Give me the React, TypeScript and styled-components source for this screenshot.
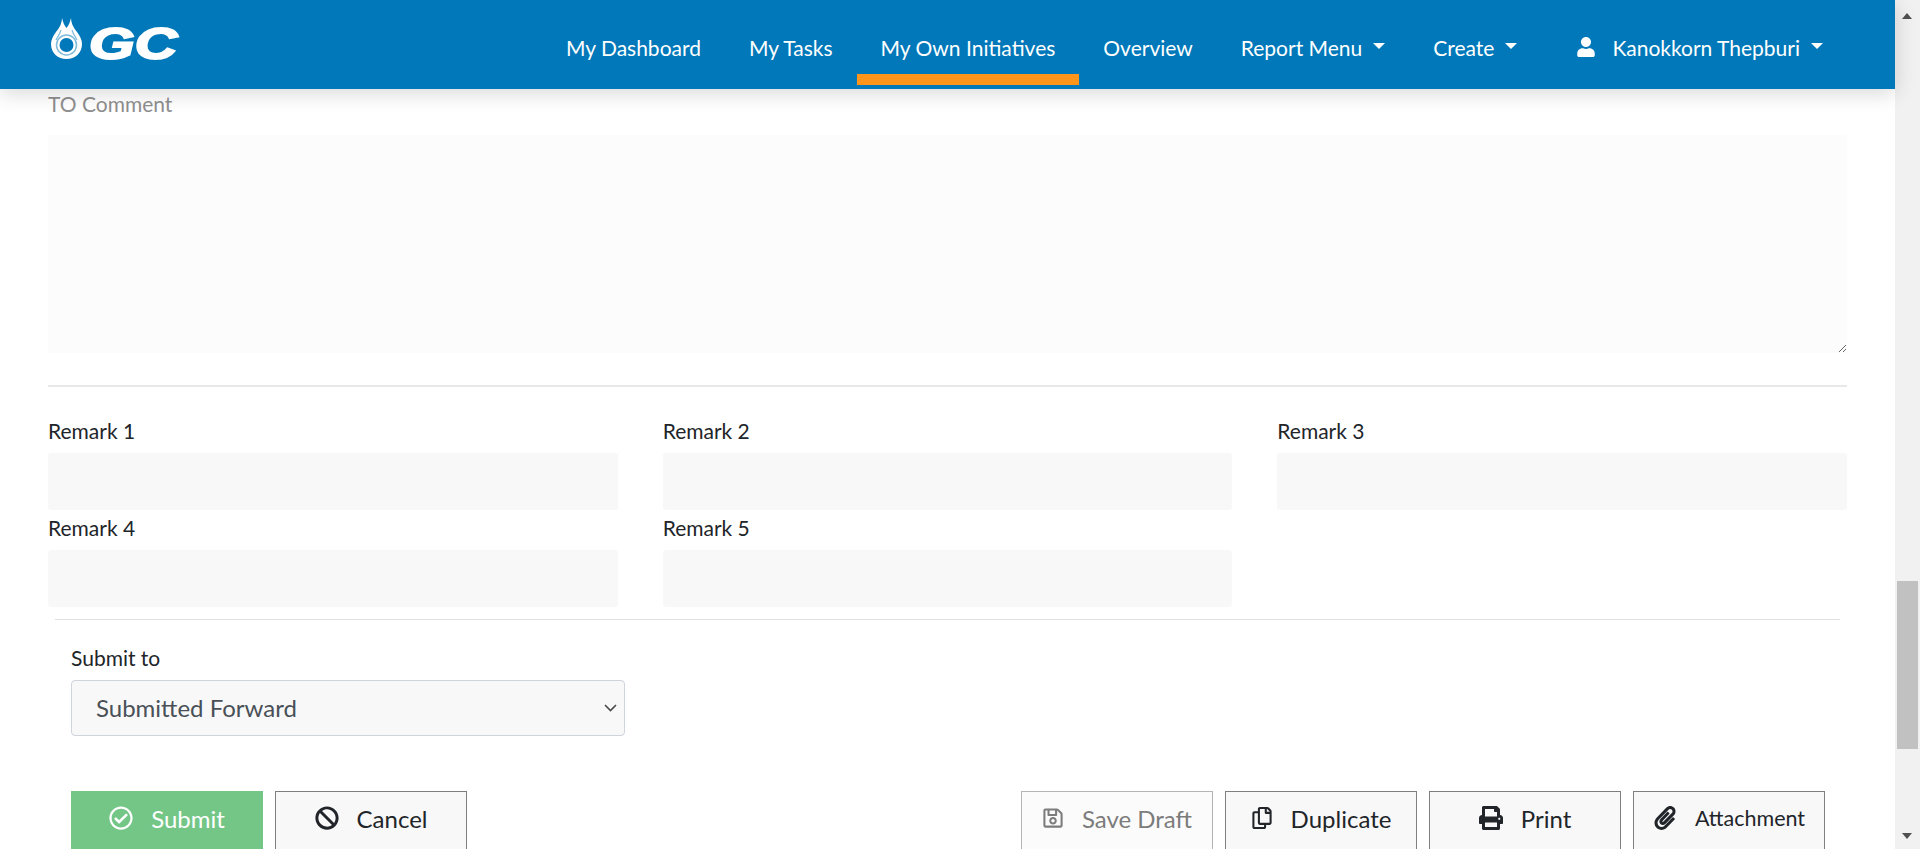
import React from "react";
import styled, { createGlobalStyle } from "styled-components";
import {
  FaBan,
  FaPaperclip,
  FaPrint,
  FaRegCheckCircle,
  FaRegCopy,
  FaRegSave,
  FaUser,
} from "react-icons/fa";

const GlobalStyle = createGlobalStyle`
  * { box-sizing: border-box; }
  html, body { margin: 0; height: 100%; overflow: hidden; }
  body {
    font-family: Lato, "Open Sans", sans-serif;
    color: #212529;
    background: #fff;
  }
`;

const Shell = styled.div`
  display: flex;
  height: 849px;
  overflow: hidden;
`;

const Page = styled.div`
  flex: 1;
  min-width: 0;
  display: flex;
  flex-direction: column;
`;

const Header = styled.header`
  position: relative;
  z-index: 2;
  flex: none;
  height: 89px;
  display: flex;
  align-items: flex-start;
  justify-content: space-between;
  padding: 0 48px;
  background: #0078b9;
  box-shadow: 0 4px 20px rgba(0, 0, 0, 0.16);
`;

const LogoMark = styled.svg`
  display: block;
  width: 132px;
  height: 46px;
  margin-top: 17px;
  overflow: visible;
`;

const Nav = styled.nav`
  display: flex;
  height: 85px;
`;

const NavItem = styled.a<{ $active?: boolean; $caret?: boolean }>`
  display: flex;
  align-items: center;
  padding: 20px 24px 0;
  color: #fff;
  font-size: 21px;
  white-space: nowrap;
  border-bottom: 11px solid ${(p) => (p.$active ? "#ff951a" : "transparent")};

  ${(p) =>
    p.$caret &&
    `
    &::after {
      content: "";
      margin-left: 11px;
      margin-top: -2px;
      border-top: 6px solid #fff;
      border-left: 6px solid transparent;
      border-right: 6px solid transparent;
    }
  `}
`;

const UserItem = styled(NavItem)`
  margin-left: 11px;

  svg {
    font-size: 20px;
    margin-right: 16px;
  }
`;

const Main = styled.main`
  flex: 1;
  min-height: 0;
  overflow: hidden;
  padding: 0 48px;
`;

const FieldLabel = styled.label<{ $muted?: boolean }>`
  display: block;
  font-size: 21px;
  line-height: 32px;
  margin-top: ${(p) => (p.$muted ? "-1px" : "0")};
  margin-bottom: 6px;
  color: ${(p) => (p.$muted ? "#8f8f8f" : "#212529")};
`;

const CommentBox = styled.textarea`
  display: block;
  width: 100%;
  height: 218px;
  margin-top: 15px;
  padding: 8px 12px;
  border: none;
  border-radius: 3px;
  background: #fcfcfc;
  resize: vertical;
  outline: none;
`;

const Rule = styled.hr`
  margin: 32px 0 0;
  border: none;
  border-top: 2px solid #e8e8e8;
`;

const RemarkGrid = styled.div`
  display: grid;
  grid-template-columns: repeat(3, 1fr);
  column-gap: 45px;
  padding-top: 28px;
`;

const RemarkField = styled.div`
  height: 97px;
`;

const RemarkInput = styled.input`
  display: block;
  width: 100%;
  height: 57px;
  border: none;
  border-radius: 3px;
  background: #f8f8f8;
  outline: none;
`;

const SubmitPanel = styled.section`
  margin: 10px 7px 0;
  padding: 22px 15px 0 16px;
  border-top: 1px solid #e0e0e0;
`;

const SelectWrap = styled.div`
  position: relative;
  width: 554px;
  height: 56px;
`;

const SubmitSelect = styled.select`
  display: block;
  width: 100%;
  height: 100%;
  padding: 0 32px 2px 24px;
  appearance: none;
  border: 1px solid #ced4da;
  border-radius: 4px;
  background-color: #f8f8f8;
  color: #495057;
  font-family: inherit;
  font-size: 24px;
`;

const SelectChevron = styled.svg`
  position: absolute;
  top: 24px;
  right: 8px;
  width: 13px;
  height: 8px;
  pointer-events: none;
`;

const ActionRow = styled.div`
  display: flex;
  justify-content: space-between;
  margin-top: 55px;
`;

const ActionGroup = styled.div`
  display: flex;
  gap: 12px;
`;

const ActionButton = styled.button<{ $tone?: "success" | "disabled"; $small?: boolean; $iconSize?: number }>`
  display: flex;
  align-items: center;
  justify-content: center;
  gap: 18px;
  width: 192px;
  height: 60px;
  padding: 0 0 6px;
  border: 1px solid #7f7f7f;
  border-radius: 0;
  background: #f8f8f8;
  color: #212529;
  font-family: inherit;
  font-size: ${(p) => (p.$small ? "21.5px" : "24px")};

  svg {
    font-size: ${(p) => p.$iconSize ?? 24}px;
    flex: none;
  }

  ${(p) =>
    p.$tone === "success" &&
    `
    border-color: #74c687;
    background: #74c687;
    color: #fff;
  `}

  ${(p) =>
    p.$tone === "disabled" &&
    `
    border-color: #b4b4b4;
    background: #fbfbfb;
    color: #7c7c7c;
  `}
`;

const ScrollTrack = styled.aside`
  flex: none;
  width: 25px;
  position: relative;
  display: flex;
  flex-direction: column;
  align-items: center;
  background: #f1f1f1;
`;

const ScrollThumb = styled.div`
  width: 21px;
  height: 168px;
  margin-top: 581px;
  background: #c1c1c1;
`;

const ScrollArrow = styled.span<{ $down?: boolean }>`
  position: absolute;
  left: 7px;
  ${(p) => (p.$down ? "bottom: 10px;" : "top: 13px;")}
  border-left: 5.5px solid transparent;
  border-right: 5.5px solid transparent;
  ${(p) => (p.$down ? "border-top: 6px solid #505050;" : "border-bottom: 6px solid #505050;")}
`;

const remarks = ["Remark 1", "Remark 2", "Remark 3", "Remark 4", "Remark 5"];

const Logo: React.FC = () => (
  <LogoMark viewBox="0 0 132 46" aria-label="GC">
    {/* flame drop with two peaks */}
    <path
      d="M14 1c0 5-2 9-6 14-3 4-5 8-5 12 0 9 7 15 15.5 15S34 36 34 27c0-4-2-8-5-12-4-5-6-9-6-14-1 4-2 7-4.500 10C16 8 15 5 14 1z"
      fill="#fff"
    />
    <path d="M13 13c-1 4-3 6-5 10M24 13c1 4 3 6 5 10" fill="none" stroke="#7fbcdc" strokeWidth="1.200" />
    <circle cx="18.500" cy="28" r="10" fill="none" stroke="#7fbcdc" strokeWidth="1.500" />
    <circle cx="18.500" cy="28" r="7" fill="#0078b9" />
    <text
      x="41"
      y="42"
      fill="#fff"
      stroke="#fff"
      strokeWidth="2"
      fontFamily="Liberation Sans, sans-serif"
      fontSize="44"
      fontStyle="italic"
      fontWeight="700"
      textLength="88"
      lengthAdjust="spacingAndGlyphs"
    >
      GC
    </text>
  </LogoMark>
);

const App: React.FC = () => {
  return (
    <Shell>
      <GlobalStyle />
      <Page>
        <Header>
          <Logo />
          <Nav>
            <NavItem>My Dashboard</NavItem>
            <NavItem>My Tasks</NavItem>
            <NavItem $active>My Own Initiatives</NavItem>
            <NavItem>Overview</NavItem>
            <NavItem $caret>Report Menu</NavItem>
            <NavItem $caret>Create</NavItem>
            <UserItem $caret>
              <FaUser />
              Kanokkorn Thepburi
            </UserItem>
          </Nav>
        </Header>
        <Main>
          <FieldLabel $muted>TO Comment</FieldLabel>
          <CommentBox />
          <Rule />
          <RemarkGrid>
            {remarks.map((remark) => (
              <RemarkField key={remark}>
                <FieldLabel>{remark}</FieldLabel>
                <RemarkInput />
              </RemarkField>
            ))}
          </RemarkGrid>
          <SubmitPanel>
            <FieldLabel>Submit to</FieldLabel>
            <SelectWrap>
              <SubmitSelect defaultValue="forward">
                <option value="forward">Submitted Forward</option>
              </SubmitSelect>
              <SelectChevron viewBox="0 0 13 8">
                <polyline points="1,1 6.500,6.500 12,1" fill="none" stroke="#4a4a4a" strokeWidth="1.600" />
              </SelectChevron>
            </SelectWrap>
            <ActionRow>
              <ActionGroup>
                <ActionButton $tone="success">
                  <FaRegCheckCircle />
                  Submit
                </ActionButton>
                <ActionButton>
                  <FaBan />
                  Cancel
                </ActionButton>
              </ActionGroup>
              <ActionGroup>
                <ActionButton $tone="disabled" $iconSize={22}>
                  <FaRegSave />
                  Save Draft
                </ActionButton>
                <ActionButton $iconSize={22}>
                  <FaRegCopy />
                  Duplicate
                </ActionButton>
                <ActionButton>
                  <FaPrint />
                  Print
                </ActionButton>
                <ActionButton $small>
                  <FaPaperclip />
                  Attachment
                </ActionButton>
              </ActionGroup>
            </ActionRow>
          </SubmitPanel>
        </Main>
      </Page>
      <ScrollTrack>
        <ScrollArrow />
        <ScrollThumb />
        <ScrollArrow $down />
      </ScrollTrack>
    </Shell>
  );
};

export default App;
